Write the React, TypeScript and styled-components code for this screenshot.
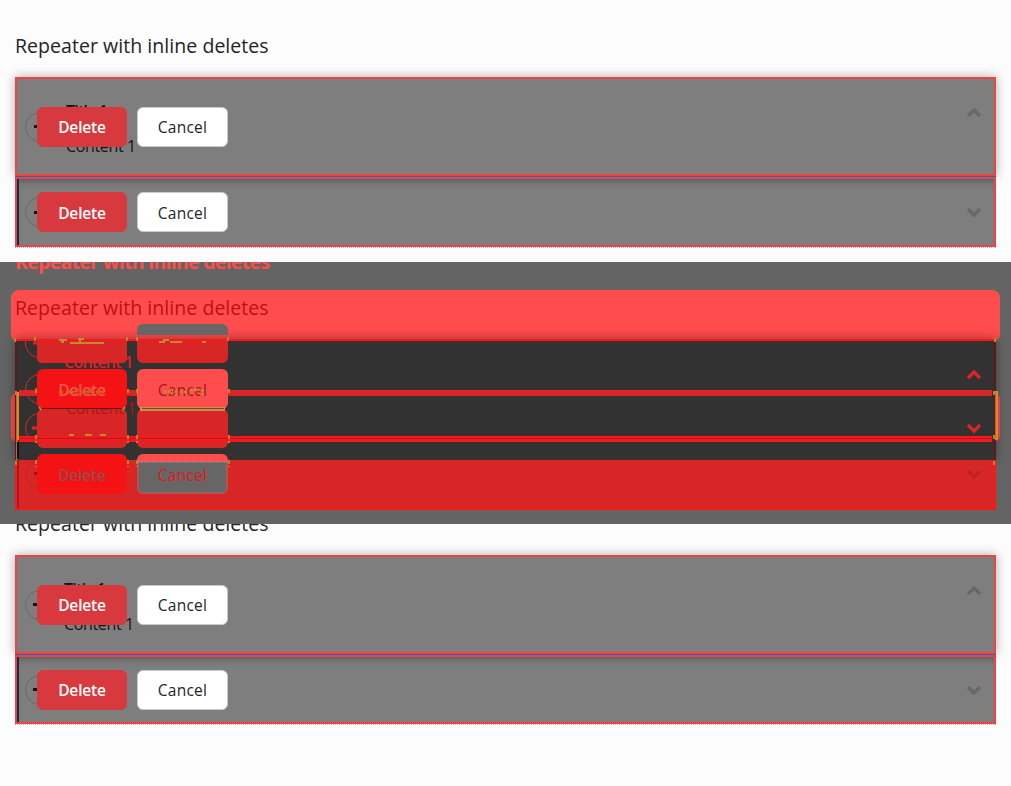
import React from "react";
import styled, { createGlobalStyle, css } from "styled-components";

const Global = createGlobalStyle`
  * { box-sizing: border-box; }
  body { margin: 0; background: #fcfcfc; font-family: "Open Sans", "Noto Sans", sans-serif; font-size: 16px; color: #212529; }
`;

const Page = styled.main`
  width: 1011px;
  height: 786px;
  display: grid;
  grid-template-rows: repeat(3, 262px);
  overflow: hidden;
`;

const Pane = styled.section<{ $cut?: boolean }>`
  display: flex;
  flex-direction: column;
  justify-content: ${(p) => (p.$cut ? "flex-end" : "flex-start")};
  overflow: hidden;
  padding: ${(p) => (p.$cut ? "0 15px 61px" : "32px 15px 0")};
`;

const Heading = styled.h2<{ $ink?: string; $bold?: boolean }>`
  margin: 0;
  height: 28px;
  flex: none;
  line-height: 28px;
  font-size: 19.5px;
  font-weight: ${(p) => (p.$bold ? 700 : 400)};
  letter-spacing: ${(p) => (p.$bold ? -0.7 : 0.05)}px;
  color: ${(p) => p.$ink ?? "#212529"};
  white-space: nowrap;
`;

const List = styled.div`
  margin-top: 17px;
  flex: none;
  border-bottom: 1px dotted #b4b4b8;
`;

const Row = styled.article<{ $open?: boolean; $short?: boolean }>`
  position: relative;
  height: ${(p) => (p.$open ? 99 : p.$short ? 69 : 70)}px;
  border: 2px solid #ee4245;
  background: #7e7e7e;
  display: flex;
  justify-content: space-between;
  padding: 0 13px 0 8px;
  box-shadow: ${(p) =>
    p.$open
      ? "0 0 10px rgba(0, 0, 0, 0.32)"
      : "inset 2px 0 #14294b, inset 0 8px 8px -6px rgba(0, 0, 0, 0.3)"};
`;

const Divider = styled.div`
  position: relative;
  height: 1px;
  background: #2863b4;
`;

const Handle = styled.div<{ $near?: boolean }>`
  width: 30px;
  height: 30px;
  margin-right: ${(p) => (p.$near ? 9 : 11)}px;
  align-self: center;
  border: 1px solid #66686b;
  border-radius: 50%;
  display: flex;
  align-items: center;
  padding-left: ${(p) => (p.$near ? 7 : 8)}px;
  &::before {
    content: "";
    width: 4px;
    height: 3px;
    background: #121315;
  }
`;

const Summary = styled.div`
  display: flex;
`;

const Copy = styled.div`
  display: flex;
  flex-direction: column;
  padding-top: 22px;
  gap: 15px;
  line-height: 20px;
  color: #121416;
  letter-spacing: -0.35px;
`;

const Title = styled.strong`
  font-weight: 600;
  letter-spacing: -0.8px;
`;

const Actions = styled.div`
  position: absolute;
  inset: 0 auto 0 20px;
  display: flex;
  align-items: center;
  gap: 10px;
`;

const Button = styled.button<{ $danger?: boolean }>`
  width: ${(p) => (p.$danger ? 90 : 91)}px;
  height: 40px;
  padding: 1px 0 0;
  border-radius: 6px;
  border: 1px solid ${(p) => (p.$danger ? "#d8393e" : "#c9c9c9")};
  background: ${(p) => (p.$danger ? "#d8393e" : "#fff")};
  color: ${(p) => (p.$danger ? "#fff" : "#212529")};
  font: ${(p) => (p.$danger ? 600 : 400)} 15.5px "Open Sans", sans-serif;
  letter-spacing: ${(p) => (p.$danger ? -0.15 : 0.25)}px;
`;

const ChevronIcon = styled.svg<{ $open?: boolean }>`
  width: 14px;
  height: 10px;
  margin-top: ${(p) => (p.$open ? 29 : 28)}px;
  fill: none;
  stroke: #66686b;
  stroke-width: 3.4;
`;

function Chevron({ open }: { open?: boolean }) {
  return (
    <ChevronIcon $open={open} viewBox="0 0 14 10">
      <path d={open ? "M1 8 7 2l6 6" : "M1 2l6 6 6-6"} />
    </ChevronIcon>
  );
}

function Confirm() {
  return (
    <Actions>
      <Button $danger>Delete</Button>
      <Button>Cancel</Button>
    </Actions>
  );
}

function Repeater({ cut }: { cut?: boolean }) {
  return (
    <Pane $cut={cut}>
      <Heading>Repeater with inline deletes</Heading>
      <List>
        <Row $open>
          <Summary>
            <Handle $near={cut} />
            <Copy>
              <Title>Title 1</Title>
              <span>Content 1</span>
            </Copy>
          </Summary>
          <Chevron open />
          <Confirm />
        </Row>
        <Divider />
        <Row $short={cut}>
          <Handle $near={cut} />
          <Chevron />
          <Confirm />
        </Row>
      </List>
    </Pane>
  );
}

/* Every layer of the comparison shares the same grid cell. */
const Canvas = styled.section`
  display: grid;
  grid-template: 262px / 1011px;
  overflow: hidden;
  background: #646464;
`;

const layer = css`
  grid-area: 1 / 1;
  display: flex;
  flex-direction: column;
  min-height: 0;
`;

const TabLayer = styled.div`
  ${layer}
  padding: 28px 11px 0;
  gap: 51px;
`;

const Tab = styled.div`
  height: 50.5px;
  border-radius: 8px 8px 6px 6px;
  background: #ff4d4d;
`;

const PanelLayer = styled.div`
  ${layer}
  padding: 77px 15px 0;
`;

const DarkPanel = styled.div`
  height: 121px;
  display: flex;
  flex-direction: column;
  gap: 40px;
  padding: 49px 2px 0;
  border: solid #641619;
  border-width: 2px 2px 0;
  border-top-color: #ff1417;
  background: #323232;
  box-shadow: 0 0 10px rgba(0, 0, 0, 0.4);
`;

const Strip = styled.div<{ $bright?: boolean }>`
  height: 6px;
  background: ${(p) => (p.$bright ? "linear-gradient(#ff1417 2px, #a31e38 2px, #a31e38 3px, #ff1417 3px)" : "#d82626")};
`;

const RedPanel = styled.div`
  height: 50px;
  border: 2px solid #ff1417;
  border-top: 0;
  background: #d82626;
  box-shadow: inset 2px 0 #a31b1e;
`;

const HeadingLayer = styled.div`
  ${layer}
  padding-left: 15px;
  gap: 18px;
  margin-top: -14px;
`;

const CaptionLayer = styled.div`
  ${layer}
  padding: 90px 0 0 64px;
  gap: 26px;
`;

const Caption = styled.span<{ $dark?: boolean }>`
  padding-left: ${(p) => (p.$dark ? 2 : 0)}px;
  line-height: 20px;
  font-weight: ${(p) => (p.$dark ? 400 : 600)};
  letter-spacing: ${(p) => (p.$dark ? -0.35 : -0.75)}px;
  color: ${(p) => (p.$dark ? "#ab171a" : "#d82626")};
`;

const ShadowButtons = styled.div`
  grid-area: 1 / 1;
  display: grid;
  grid-template: 11px 22px 39px / 90px 91px;
  column-gap: 10px;
  padding: 62px 0 0 37px;
`;

const ShadowChip = styled.div<{ $kind: "peek" | "cut" | "full" }>`
  ${(p) => p.$kind === "peek" && "grid-column: 2; background: #666; border-radius: 6px 6px 0 0;"}
  ${(p) => p.$kind === "cut" && "margin: 6px 0 -6px; background: #d82626; border-radius: 0 0 6px 6px;"}
  ${(p) => p.$kind === "full" && "margin: 52px 0 -52px; background: #d82626; border-radius: 6px;"}
`;

const FrontButtons = styled.div`
  grid-area: 1 / 1;
  display: grid;
  grid-template: 40px 40px / 90px 91px;
  gap: 45px 10px;
  padding: 107px 0 0 37px;
`;

const Chip = styled.div<{ $tone: string; $ink: string; $bold?: boolean }>`
  display: flex;
  align-items: center;
  justify-content: center;
  padding-top: 1px;
  border-radius: 6px;
  background: ${(p) => p.$tone};
  color: ${(p) => p.$ink};
  font-size: 15.5px;
  font-weight: ${(p) => (p.$bold ? 600 : 400)};
  letter-spacing: ${(p) => (p.$bold ? -0.15 : 0.25)}px;
`;

const Marks = styled.svg`
  grid-area: 1 / 1;
  width: 1011px;
  height: 262px;
  fill: none;
`;

function Comparison() {
  return (
    <Canvas>
      <TabLayer>
        <Tab />
        <Tab />
      </TabLayer>
      <PanelLayer>
        <DarkPanel>
          <Strip />
          <Strip $bright />
        </DarkPanel>
        <RedPanel />
      </PanelLayer>
      <HeadingLayer>
        <Heading $bold $ink="#ff4d4d">Repeater with inline deletes</Heading>
        <Heading $ink="#bd1015">Repeater with inline deletes</Heading>
      </HeadingLayer>
      <Marks viewBox="0 0 1011 262">
        <path d="M17 131v67M996 131v46" stroke="#bd6a20" strokeWidth="2" />
        <path d="M18 180v17" stroke="#07131c" strokeWidth="2" />
        <g stroke="#d82626">
          <path d="M25.500 79a14.500 14.500 0 0 0 12 16.500M40 112.500a14.500 14.500 0 0 0 0 29M40 151.500a14.500 14.500 0 0 0 0 29" />
          <path d="M33 81h4M35 127h2M32 166h5" strokeWidth="3" />
          <path d="M968 116l6-6 6 6M968 163l6 6 6-6" strokeWidth="3.4" />
        </g>
        <g stroke="#c42024">
          <path d="M40 197.500a14.500 14.500 0 0 0 0 29" />
          <path d="M34 211.500h3" strokeWidth="3" stroke="#911" />
          <path d="M968 209l6 6 6-6" strokeWidth="3.4" />
        </g>
      </Marks>
      <ShadowButtons>
        <ShadowChip $kind="peek" />
        <ShadowChip $kind="cut" />
        <ShadowChip $kind="cut" />
        <ShadowChip $kind="full" />
        <ShadowChip $kind="full" />
      </ShadowButtons>
      <CaptionLayer>
        <Caption>Content 1</Caption>
        <Caption $dark>Content 1</Caption>
      </CaptionLayer>
      <Marks viewBox="0 0 1011 262">
        <path d="M37 79h90v16q0 6-5 6H42q-5 0-5-6z" fill="#d82626" />
      </Marks>
      <FrontButtons>
        <Chip $bold $tone="#f51214" $ink="#ff5558">Delete</Chip>
        <Chip $tone="#ff4d4d" $ink="#a3181c">Cancel</Chip>
        <Chip $bold $tone="#f51214" $ink="#9a4b4c">Delete</Chip>
        <Chip $tone="linear-gradient(#ff4d4d 8px, #666 8px)" $ink="#e31619">Cancel</Chip>
      </FrontButtons>
      <Marks viewBox="0 0 1011 262">
        <path d="M16 78h979" stroke="#ff1417" strokeWidth="2" />
        <path d="M37 175h191M37 178.500h191" stroke="#ff1417" strokeWidth="2" />
        <path d="M37 176.500h191" stroke="#a31e38" />
        <path d="M138 200v26q0 5 5 5h79q5 0 5-5v-26" stroke="#e44c4c" />
        <path d="M40 146.500h84" stroke="#65191b" />
        <path d="M140 147h85" stroke="#d58b40" strokeWidth="4" />
        <path d="M142 146.500h82" stroke="#555" />
        <path d="M138 200h89" stroke="#aaa" strokeDasharray="1 1" />
        <g stroke="#b98328" strokeWidth="2" strokeDasharray="4 2 2 1">
          <path d="M35 75v6M127 75v6M137 75v6M228 75v6M15 76v5M995 76v5" />
          <path d="M36 127v6M128 127v6M137 127v6M229 127v6M16 129v6M994 129v6" />
          <path d="M36 173v8M128 173v8M137 173v8M229 173v8M994 173v6" />
          <path d="M36 198v7M128 198v7M137 198v7M229 198v7M16 199v5M994 199v4" />
          <path d="M39 145l3 4M125 145l-3 4" />
        </g>
        <g stroke="#c18a30" strokeWidth="2">
          <path d="M59 78h8M70 81h20M78 77h6M88 81h16M159 80h6M163 78h6M170 80h12M202 80h4" />
          <path d="M80 76v6M61 80h3" />
          <path d="M69 173h5M85 173h7M100 173h6" />
        </g>
        <g stroke="#c7651b" strokeWidth="3">
          <path d="M59 130h5M66 130h8M77 126v8M82 130h7M91 127v7M96 130h8" strokeDasharray="4 1" />
          <path d="M164 130h9M176 128v6M180 130h8M190 128h9M202 127v7" stroke="#cf8030" strokeDasharray="3 1" />
        </g>
        <path d="M995 130h2v47h-2M18 130v48" stroke="#d48735" strokeWidth="2" />
      </Marks>
    </Canvas>
  );
}

export default function App() {
  return (
    <Page>
      <Global />
      <Repeater />
      <Comparison />
      <Repeater cut />
    </Page>
  );
}
